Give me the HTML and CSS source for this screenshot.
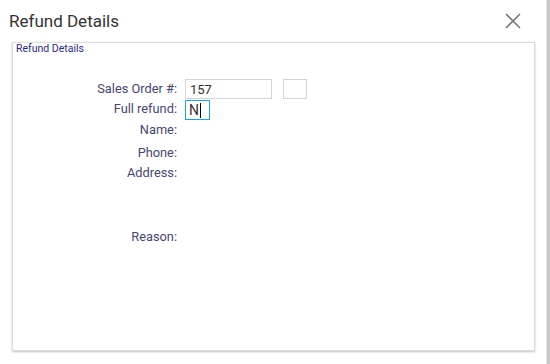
FILE: index.html
```html
<!DOCTYPE html>
<html lang="en">
<head>
    <meta charset="UTF-8">
    <meta name="viewport" content="width=device-width, initial-scale=1.0">
    <title>Refund Details</title>
    <link rel="stylesheet" href="styles.css">
</head>
<body>
<div class="dialog">
    <header class="dialog-header">
        <h1>Refund Details</h1>
        <button class="close" aria-label="Close">
            <svg width="16" height="16" viewBox="0 0 16 16">
                <path d="M1 1 L15 15 M15 1 L1 15" stroke="#7a7a7a" stroke-width="1.6" fill="none"/>
            </svg>
        </button>
    </header>
    <section class="panel">
        <div class="panel-title">Refund Details</div>
        <div class="form">
            <label class="row-1">Sales Order #:</label>
            <div class="field row-1">
                <input class="order" type="text" value="157">
                <input class="order-extra" type="text">
            </div>

            <label class="row-2">Full refund:</label>
            <div class="field row-2">
                <div class="yn">N<span class="caret"></span></div>
            </div>

            <label class="row-3">Name:</label>
            <div class="field row-3"></div>

            <label class="row-4">Phone:</label>
            <div class="field row-4"></div>

            <label class="row-5">Address:</label>
            <div class="field row-5"></div>

            <label class="row-6">Reason:</label>
            <div class="field row-6"></div>
        </div>
    </section>
</div>
<div class="backdrop-edge"></div>
</body>
</html>
```

FILE: styles.css
```css
html, body {
    margin: 0;
    height: 100%;
}

body {
    display: flex;
    background: #fff;
    font-family: Roboto, "Liberation Sans", Arial, sans-serif;
    overflow: hidden;
}

.dialog {
    width: 547px;
    height: 364px;
    background: #fff;
}

.dialog-header {
    display: flex;
    justify-content: space-between;
    align-items: center;
    height: 41px;
    padding: 0 25px 0 9px;
}

.dialog-header h1 {
    margin: 0;
    font-size: 17px;
    font-weight: 400;
    color: #333;
}

.close {
    border: none;
    background: none;
    padding: 0;
    width: 16px;
    height: 16px;
    display: flex;
}

.panel {
    margin: 1px 0 0 12px;
    width: 521px;
    height: 307px;
    border: 1px solid #dcdcdc;
    box-shadow: 0 1px 2px rgba(0, 0, 0, 0.25);
}

.panel-title {
    padding: 0 0 0 3px;
    font-size: 10.5px;
    line-height: 12px;
    color: #2b2a82;
}

.form {
    display: grid;
    grid-template-columns: 164px auto;
    column-gap: 8px;
    margin-top: 24px;
}

.form label {
    text-align: right;
    font-size: 12.8px;
    line-height: 20px;
    color: #47466f;
}

.field {
    display: flex;
    gap: 11px;
    min-height: 20px;
}

.field.row-2 {
    margin-top: 1px;
}

.row-3 {
    line-height: 19px;
}

.field.row-3 {
    min-height: 19px;
}

.row-4 {
    margin-top: 3px;
}

.field.row-5 {
    min-height: 64px;
}

.form input {
    box-sizing: border-box;
    height: 20px;
    border: 1px solid #d4d4d4;
    padding: 1px 4px 0;
    font-family: inherit;
    font-size: 13px;
    color: #333;
    outline: none;
}

.order {
    width: 87px;
}

.order-extra {
    width: 24px;
}

.yn {
    box-sizing: border-box;
    width: 25px;
    height: 20px;
    border: 1px solid #1ea2dc;
    padding: 1px 0 0 3px;
    font-size: 14px;
    line-height: 17px;
    color: #333;
    display: flex;
    align-items: center;
}

.caret {
    display: inline-block;
    width: 1px;
    height: 15px;
    background: #000;
    margin-left: 1px;
}

.backdrop-edge {
    width: 3px;
    background: #c9c9c9;
    border-left: 1px solid #e2e2e2;
}
```
